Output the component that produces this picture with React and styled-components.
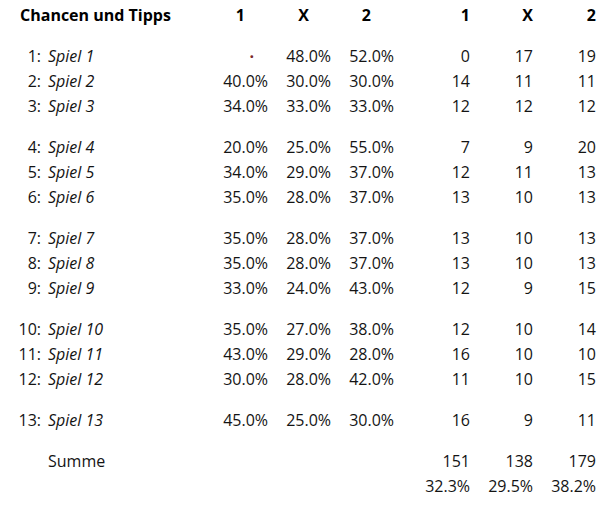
import React from "react";
import styled, { createGlobalStyle } from "styled-components";

const Global = createGlobalStyle`
  html, body {
    margin: 0;
    padding: 0;
    background: #ffffff;
  }
  body {
    font-family: "Open Sans", "Noto Sans", "Liberation Sans", sans-serif;
    color: #141414;
  }
`;

const Sheet = styled.div`
  display: grid;
  grid-template-columns: 220px 48px 63px 63px 76px 63px 63px;
  align-items: center;
  padding-top: 3px;
  font-size: 16px;
  line-height: 25px;
`;

const Title = styled.div`
  padding-left: 20px;
  font-size: 16px;
  font-weight: 700;
  color: #000;
  white-space: nowrap;
`;

const Head = styled.div`
  justify-self: end;
  padding-right: ${(p) => p.$pad || 0}px;
  font-weight: 700;
  color: #000;
`;

const Gap = styled.div`
  grid-column: 1 / -1;
  height: 16px;
`;

const Label = styled.div`
  display: flex;
  white-space: nowrap;
`;

const Nr = styled.span`
  width: 41px;
  text-align: right;
`;

const Name = styled.span`
  margin-left: 7px;
  font-style: ${(p) => (p.$plain ? "normal" : "italic")};
`;

const Val = styled.div`
  justify-self: end;
  padding-right: ${(p) => p.$pad || 0}px;
  white-space: nowrap;
`;

const Dot = styled.span`
  color: #7a2a2a;
  font-weight: 700;
`;

const groups = [
  [
    [1, null, "48.0%", "52.0%", 0, 17, 19],
    [2, "40.0%", "30.0%", "30.0%", 14, 11, 11],
    [3, "34.0%", "33.0%", "33.0%", 12, 12, 12],
  ],
  [
    [4, "20.0%", "25.0%", "55.0%", 7, 9, 20],
    [5, "34.0%", "29.0%", "37.0%", 12, 11, 13],
    [6, "35.0%", "28.0%", "37.0%", 13, 10, 13],
  ],
  [
    [7, "35.0%", "28.0%", "37.0%", 13, 10, 13],
    [8, "35.0%", "28.0%", "37.0%", 13, 10, 13],
    [9, "33.0%", "24.0%", "43.0%", 12, 9, 15],
  ],
  [
    [10, "35.0%", "27.0%", "38.0%", 12, 10, 14],
    [11, "43.0%", "29.0%", "28.0%", 16, 10, 10],
    [12, "30.0%", "28.0%", "42.0%", 11, 10, 15],
  ],
  [[13, "45.0%", "25.0%", "30.0%", 16, 9, 11]],
];

function Row({ r }) {
  const [nr, p1, px, p2, c1, cx, c2] = r;
  return (
    <>
      <Label>
        <Nr>{nr}:</Nr>
        <Name>Spiel {nr}</Name>
      </Label>
      {p1 ? (
        <Val>{p1}</Val>
      ) : (
        <Val $pad={14}>
          <Dot>·</Dot>
        </Val>
      )}
      <Val>{px}</Val>
      <Val>{p2}</Val>
      <Val>{c1}</Val>
      <Val>{cx}</Val>
      <Val>{c2}</Val>
    </>
  );
}

export default function App() {
  return (
    <>
      <Global />
      <Sheet>
        <Title>Chancen und Tipps</Title>
        <Head $pad={23}>1</Head>
        <Head $pad={22}>X</Head>
        <Head $pad={23}>2</Head>
        <Head>1</Head>
        <Head>X</Head>
        <Head>2</Head>

        {groups.map((g, i) => (
          <React.Fragment key={i}>
            <Gap />
            {g.map((r) => (
              <Row key={r[0]} r={r} />
            ))}
          </React.Fragment>
        ))}

        <Gap />
        <Label>
          <Nr />
          <Name $plain>Summe</Name>
        </Label>
        <div />
        <div />
        <div />
        <Val>151</Val>
        <Val>138</Val>
        <Val>179</Val>

        <div />
        <div />
        <div />
        <div />
        <Val>32.3%</Val>
        <Val>29.5%</Val>
        <Val>38.2%</Val>
      </Sheet>
    </>
  );
}
